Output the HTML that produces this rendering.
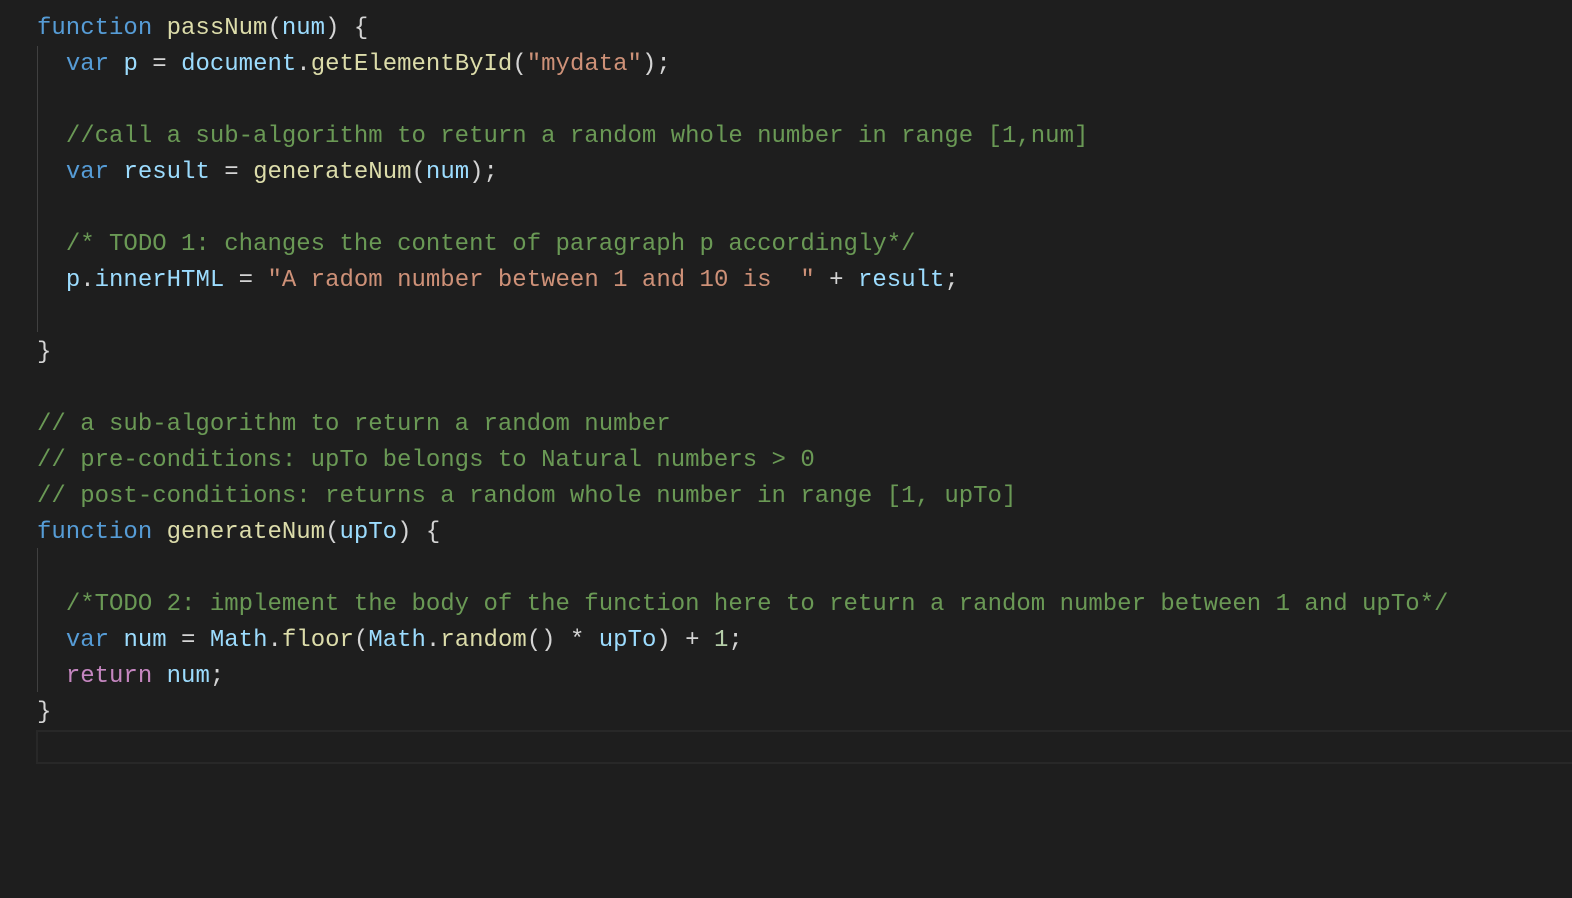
<!DOCTYPE html>
<html><head><meta charset="utf-8"><style>
html,body{margin:0;padding:0;background:#1e1e1e;width:1572px;height:898px;overflow:hidden}
pre{margin:0;position:absolute;left:37px;top:11px;font-family:"Liberation Mono",monospace;font-size:24px;line-height:36px;color:#d4d4d4}
.k{color:#569cd6}.f{color:#dcdcaa}.v{color:#9cdcfe}.s{color:#ce9178}.c{color:#6a9955}.n{color:#b5cea8}.r{color:#c586c0}
.g{position:absolute;left:37px;width:1px;background:#404040}
.cur{position:absolute;left:36px;top:730px;width:1540px;height:30px;border:2px solid #282828;border-right:none}
</style></head><body>
<div class="g" style="top:46px;height:286px"></div>
<div class="g" style="top:548px;height:144px"></div>
<div class="cur"></div>
<pre><span class="k">function</span> <span class="f">passNum</span>(<span class="v">num</span>) {
  <span class="k">var</span> <span class="v">p</span> = <span class="v">document</span>.<span class="f">getElementById</span>(<span class="s">"mydata"</span>);

  <span class="c">//call a sub-algorithm to return a random whole number in range [1,num]</span>
  <span class="k">var</span> <span class="v">result</span> = <span class="f">generateNum</span>(<span class="v">num</span>);

  <span class="c">/* TODO 1: changes the content of paragraph p accordingly*/</span>
  <span class="v">p</span>.<span class="v">innerHTML</span> = <span class="s">"A radom number between 1 and 10 is  "</span> + <span class="v">result</span>;

}

<span class="c">// a sub-algorithm to return a random number</span>
<span class="c">// pre-conditions: upTo belongs to Natural numbers &gt; 0</span>
<span class="c">// post-conditions: returns a random whole number in range [1, upTo]</span>
<span class="k">function</span> <span class="f">generateNum</span>(<span class="v">upTo</span>) {

  <span class="c">/*TODO 2: implement the body of the function here to return a random number between 1 and upTo*/</span>
  <span class="k">var</span> <span class="v">num</span> = <span class="v">Math</span>.<span class="f">floor</span>(<span class="v">Math</span>.<span class="f">random</span>() * <span class="v">upTo</span>) + <span class="n">1</span>;
  <span class="r">return</span> <span class="v">num</span>;
}
</pre>
</body></html>
